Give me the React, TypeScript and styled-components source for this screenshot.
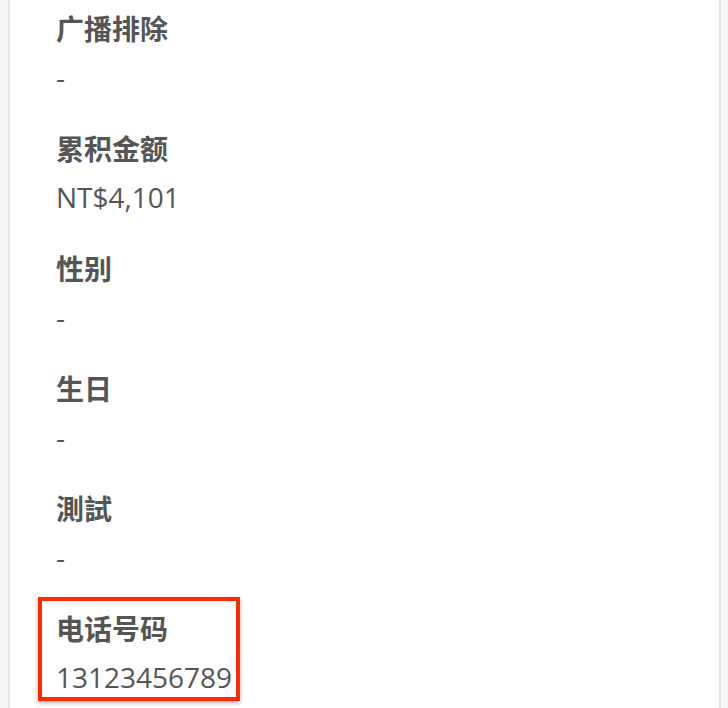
import styled, { createGlobalStyle } from 'styled-components';

const FIELDS = [
  { label: '广播排除', value: '-' },
  { label: '累积金额', value: 'NT$4,101' },
  { label: '性别', value: '-' },
  { label: '生日', value: '-' },
  { label: '測試', value: '-' },
  { label: '电话号码', value: '13123456789', marked: true },
];

const GlobalStyle = createGlobalStyle`
  html, body {
    margin: 0;
    padding: 0;
    background: #f6f6f6;
  }
  body {
    font-family: 'Open Sans', 'Noto Sans CJK SC', sans-serif;
    color: #555555;
  }
`;

export default function App() {
  return (
    <>
      <GlobalStyle />
      <Page>
        <Panel>
          {FIELDS.map((f) => (
            <Field key={f.label} $marked={!!f.marked}>
              <Label>{f.label}</Label>
              <Value>{f.value}</Value>
            </Field>
          ))}
        </Panel>
      </Page>
    </>
  );
}

const Page = styled.div`
  height: 708px;
  overflow: hidden;
  padding: 0 7px 0 8px;
`;

const Panel = styled.div`
  height: 100%;
  background: #ffffff;
  border-left: 2px solid #e6e6e6;
  border-right: 2px solid #e6e6e6;
  padding: 8px 0 0 46px;
  box-sizing: border-box;
`;

const Field = styled.div<{ $marked: boolean }>`
  position: relative;
  display: flex;
  flex-direction: column;
  gap: 9px;
  width: max-content;
  margin-bottom: 31px;

  ${({ $marked }) =>
    $marked &&
    `
    &::after {
      content: '';
      position: absolute;
      left: -18px;
      right: -8px;
      top: -11px;
      bottom: -4px;
      border: 4px solid #ff2a00;
      box-shadow: 0 2px 4px rgba(0, 0, 0, 0.3);
      pointer-events: none;
    }
  `}
`;

const Label = styled.div`
  font-family: 'Noto Sans CJK SC', 'Open Sans', sans-serif;
  font-size: 28px;
  font-weight: 700;
  line-height: 40px;
  color: #555555;
`;

const Value = styled.div`
  font-family: 'Open Sans', 'Noto Sans CJK SC', sans-serif;
  font-size: 28px;
  line-height: 40px;
  color: #555555;
`;
